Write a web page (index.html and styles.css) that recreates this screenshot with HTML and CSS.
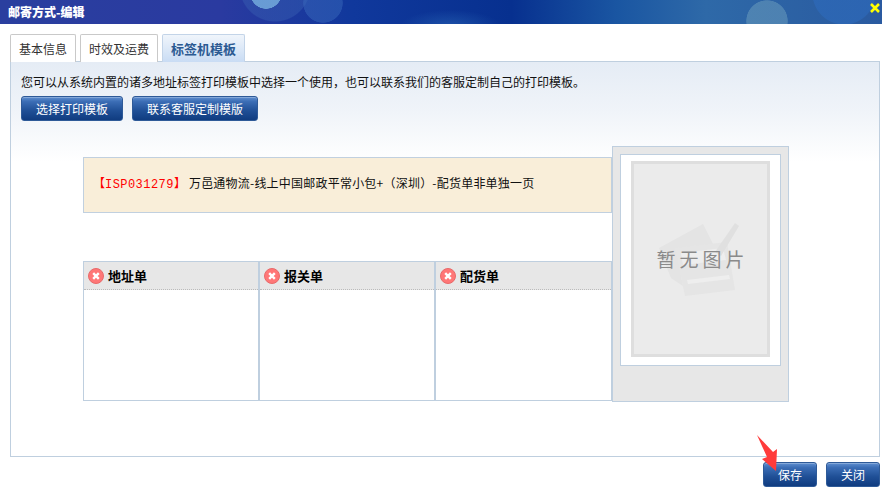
FILE: index.html
```html
<!DOCTYPE html>
<html lang="zh-CN">
<head>
<meta charset="utf-8">
<title>邮寄方式-编辑</title>
<link rel="stylesheet" href="styles.css">
</head>
<body>
<header class="titlebar">
  <h1 class="title">邮寄方式-编辑</h1>
  <svg class="close-x" width="12" height="12" viewBox="0 0 12 12"><path d="M2 2L10 10M10 2L2 10" stroke="#ffff00" stroke-width="2.6"/></svg>
</header>
<nav class="tabs">
  <div class="tab tab-a">基本信息</div>
  <div class="tab tab-b">时效及运费</div>
  <div class="tab tab-c active">标签机模板</div>
</nav>
<main class="panel">
  <p class="hint">您可以从系统内置的诸多地址标签打印模板中选择一个使用，也可以联系我们的客服定制自己的打印模板。</p>
  <div class="actions">
    <button class="btn btn-pick">选择打印模板</button>
    <button class="btn btn-contact">联系客服定制模版</button>
  </div>
  <section class="template">
    <div class="template-main">
      <div class="template-name"><span class="code"><b>【</b><span class="code-id">ISP031279</span><b>】</b></span><span class="name-text">万邑通物流-线上中国邮政平常小包+（深圳）-配货单非单独一页</span></div>
      <div class="cards">
        <div class="card">
          <div class="card-head"><svg class="err" width="16" height="16" viewBox="0 0 16 16"><circle cx="8" cy="8" r="7.5" fill="#f77"/><circle cx="8" cy="8" r="7.5" fill="none" stroke="#e86a6a"/><path d="M5.2 5.2L10.8 10.8M10.8 5.2L5.2 10.8" stroke="#fff" stroke-width="2.4"/></svg>地址单</div>
        </div>
        <div class="card">
          <div class="card-head"><svg class="err" width="16" height="16" viewBox="0 0 16 16"><circle cx="8" cy="8" r="7.5" fill="#f77"/><circle cx="8" cy="8" r="7.5" fill="none" stroke="#e86a6a"/><path d="M5.2 5.2L10.8 10.8M10.8 5.2L5.2 10.8" stroke="#fff" stroke-width="2.4"/></svg>报关单</div>
        </div>
        <div class="card">
          <div class="card-head"><svg class="err" width="16" height="16" viewBox="0 0 16 16"><circle cx="8" cy="8" r="7.5" fill="#f77"/><circle cx="8" cy="8" r="7.5" fill="none" stroke="#e86a6a"/><path d="M5.2 5.2L10.8 10.8M10.8 5.2L5.2 10.8" stroke="#fff" stroke-width="2.4"/></svg>配货单</div>
        </div>
      </div>
    </div>
    <aside class="preview">
      <div class="preview-frame">
        <div class="preview-img">
          <svg class="noimg-art" width="84" height="78" viewBox="0 0 84 78">
            <path d="M2 28L46 4L56 24L20 34L26 66L14 58Z" fill="#e4e4e4"/>
            <path d="M18 28L70 22L78 70L28 76Z" fill="#e5e5e5"/>
            <path d="M24 33L66 28L69 40L26 45Z" fill="#eeeeee"/>
            <path d="M30 60L72 55L73 59L31 64Z" fill="#eeeeee"/>
            <path d="M58 32L78 3L82 6L64 36Z" fill="#e0e0e0"/>
          </svg>
          <span class="noimg-text">暂无图片</span>
        </div>
      </div>
    </aside>
  </section>
</main>
<footer class="footer">
  <div class="save-wrap">
    <button class="btn btn-small">保存</button>
    <svg class="arrow" width="24" height="40" viewBox="0 0 24 40"><path d="M1 1L17 18L21 15L20 37L6 25L11 23Z" fill="#ff3b3b"/></svg>
  </div>
  <button class="btn btn-small">关闭</button>
</footer>
</body>
</html>
```
FILE: styles.css
```css
* { box-sizing: border-box; }
html, body { margin: 0; padding: 0; }
body {
  width: 882px;
  height: 488px;
  overflow: hidden;
  background: #fff;
  font-family: "Noto Sans CJK SC", "Liberation Sans", sans-serif;
  font-size: 12px;
  color: #111;
}
.titlebar {
  height: 24px;
  display: flex;
  align-items: center;
  justify-content: space-between;
  padding: 0 0 0 8px;
  background:
    radial-gradient(circle 21px at 767px 21px, rgba(110,160,190,.5) 97%, transparent 100%),
    radial-gradient(circle 32px at 844px -7px, rgba(45,105,185,.7) 97%, transparent 100%),
    radial-gradient(circle 16px at 266px -7px, rgba(115,170,220,.85) 97%, transparent 100%),
    radial-gradient(circle 20px at 323px 3px, rgba(60,110,190,.45) 97%, transparent 100%),
    radial-gradient(circle 36px at 275px -14px, rgba(60,100,180,.4) 97%, transparent 100%),
    radial-gradient(ellipse 50px 16px at 450px 26px, rgba(40,100,180,.6), transparent 100%),
    linear-gradient(90deg, #2a3f9f 0, #2a3aa0 25%, #10389c 40%, #07308f 58%, #1a56a2 70%, #2e69a8 80%, #2a5aa0 100%);
}
.title {
  margin: 0;
  font-size: 12px;
  line-height: 24px;
  font-weight: 900;
  color: #fff;
}
.close-x { margin-right: 1px; margin-top: -8px; }
.tabs {
  display: flex;
  gap: 4px;
  padding: 10px 0 0 10px;
  height: 38px;
  margin-bottom: -1px;
}
.tab {
  height: 28px;
  border: 1px solid #c9c9c9;
  border-bottom: 0;
  border-radius: 2px 2px 0 0;
  background: #fff;
  text-align: center;
  line-height: 27px;
  color: #333;
  position: relative;
  z-index: 1;
}
.tab-a { width: 66px; }
.tab-b { width: 78px; }
.tab-c { width: 83px; }
.tab.active {
  border-color: #c3d4e8;
  background: linear-gradient(#f0f5fb, #c9dcf4);
  color: #2c5a92;
  font-weight: 700;
  font-size: 13px;
}
.panel {
  width: 870px;
  height: 396px;
  margin-left: 10px;
  padding: 0 10px;
  border: 1px solid #bfcfdf;
  background: linear-gradient(#e5ecf5 0, #f0f4f9 50px, #fff 100px);
}
.hint {
  margin: 0;
  height: 34px;
  line-height: 40px;
  color: #111;
}
.actions {
  display: flex;
  gap: 9px;
}
.btn {
  height: 25px;
  padding: 0;
  border: 1px solid #2e5a98;
  border-radius: 3px;
  background: linear-gradient(#5f8fd0 0, #3b6db5 20%, #1f4f96 60%, #103c80 100%);
  box-shadow: inset 0 1px 0 rgba(255,255,255,.25);
  color: #fff;
  font-family: inherit;
  font-size: 12px;
  line-height: 23px;
  cursor: pointer;
}
.btn-pick { width: 102px; }
.btn-contact { width: 126px; }
.btn-small { width: 54px; }
.template {
  display: flex;
  margin: 25px 0 0 62px;
  width: 706px;
}
.template-main {
  width: 529px;
  padding-top: 11px;
}
.template-name {
  height: 56px;
  line-height: 50px;
  padding-left: 9px;
  border: 1px solid #c1d0df;
  background: #f9eed9;
  color: #111;
}
.code { color: #f00; margin-right: 3px; }
.code b { font-weight: 400; }
.code-id { font-family: "Liberation Mono", monospace; font-size: 12px; letter-spacing: .45px; }
.name-text { letter-spacing: .22px; }
.cards {
  display: grid;
  grid-template-columns: 176px 176px 177px;
  margin-top: 48px;
  height: 140px;
}
.card {
  background: #fff;
  border: 1px solid #bfcfdf;
}
.card-head {
  height: 28px;
  display: flex;
  align-items: center;
  gap: 4px;
  padding-left: 4px;
  background: #e7e7e7;
  border-bottom: 1px dotted #bbb;
  font-size: 13px;
  font-weight: 700;
  color: #000;
}
.preview {
  width: 177px;
  height: 256px;
  padding: 7px 7px 0;
  border: 1px solid #bfcfdf;
  background: #e7e7e7;
  flex: none;
}
.preview-frame {
  height: 212px;
  padding: 6px 10px 8px;
  border: 1px solid #bfcfdf;
  background: #fff;
}
.preview-img {
  position: relative;
  height: 196px;
  display: flex;
  align-items: center;
  justify-content: center;
  border: 3px solid #dedede;
  background: #ebebeb;
}
.noimg-art { position: absolute; left: 23px; top: 56px; }
.noimg-text {
  position: relative;
  margin-top: -2px;
  font-size: 19px;
  letter-spacing: 4px;
  margin-right: -4px;
  color: #8a8a8a;
}
.footer {
  display: flex;
  justify-content: flex-end;
  gap: 9px;
  padding: 5px 2px 0 0;
}
.save-wrap { position: relative; display: flex; }
.arrow { position: absolute; left: -7px; top: -28px; }
```
